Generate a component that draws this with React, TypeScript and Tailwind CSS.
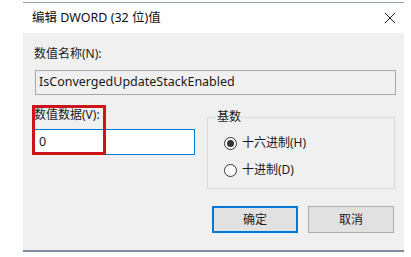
import React from "react";

const font = { fontFamily: '"Segoe UI", "Noto Sans", "Noto Sans CJK SC", sans-serif' };

function Radio({ checked, label }: { checked?: boolean; label: string }) {
  return (
    <div className="flex items-center gap-[5px] h-[14px]">
      <span className="relative w-[13px] h-[13px] rounded-full border border-[#333] bg-white flex items-center justify-center">
        {checked && <span className="w-[7px] h-[7px] rounded-full bg-[#333]" />}
      </span>
      <span className="text-[12px] text-[#1a1a1a] leading-none">{label}</span>
    </div>
  );
}

export default function App() {
  return (
    <div className="w-[411px] h-[257px] bg-white overflow-hidden" style={font}>
      <div className="ml-[23px] mt-[2px] w-[381px] h-[250px] flex flex-col border-t border-[#9aa3ad] border-b-2 border-b-[#7f8e9c]">
        {/* title bar */}
        <div className="h-[30px] bg-white flex items-center justify-between pl-[9px] pr-[8px]">
          <span className="text-[12.5px] text-[#111]">编辑 DWORD (32 位)值</span>
          <svg width="12" height="12" viewBox="0 0 12 12">
            <path d="M1 1 L11 11 M11 1 L1 11" stroke="#222" strokeWidth="1" />
          </svg>
        </div>
        {/* body */}
        <div className="flex-1 bg-[#f0f0f0] pl-[11px] pr-[8px] pt-[13px]">
          <div className="text-[12px] text-[#1a1a1a] leading-[16px]">数值名称(N):</div>
          <div className="mt-[8px] ml-[1px] h-[25px] border border-[#a8a8a8] bg-[#f0f0f0] flex items-center pl-[3px] text-[12.5px] text-[#1a1a1a]">
            IsConvergedUpdateStackEnabled
          </div>
          <div className="mt-[12px] flex">
            <div className="relative w-[161px]">
              <div className="text-[12px] text-[#1a1a1a] leading-[16px]">数值数据(V):</div>
              <div className="mt-[6px] h-[26px] border border-[#0078d7] bg-white flex items-center pl-[4px] text-[12.5px] text-[#1a1a1a]">
                0
              </div>
              <div className="absolute left-[-2px] top-[-2px] w-[74px] h-[50px] border-[3px] border-[#d0121b]" />
            </div>
            <div className="relative ml-[12px] mt-[10px] w-[188px] h-[72px] border border-[#d9d9d9]">
              <span className="absolute left-[8px] top-[-9px] bg-[#f0f0f0] px-[1px] text-[12px] text-[#1a1a1a] leading-[16px]">
                基数
              </span>
              <div className="pl-[16px] pt-[18px] flex flex-col gap-[13px]">
                <Radio checked label="十六进制(H)" />
                <Radio label="十进制(D)" />
              </div>
            </div>
          </div>
          <div className="mt-[17px] flex justify-end gap-[10px] pr-[2px]">
            <button className="w-[86px] h-[27px] border-2 border-[#0078d7] bg-[#e1e1e1] text-[12px] text-[#1a1a1a]">
              确定
            </button>
            <button className="w-[86px] h-[27px] border border-[#adadad] bg-[#e1e1e1] text-[12px] text-[#1a1a1a]">
              取消
            </button>
          </div>
        </div>
      </div>
    </div>
  );
}
